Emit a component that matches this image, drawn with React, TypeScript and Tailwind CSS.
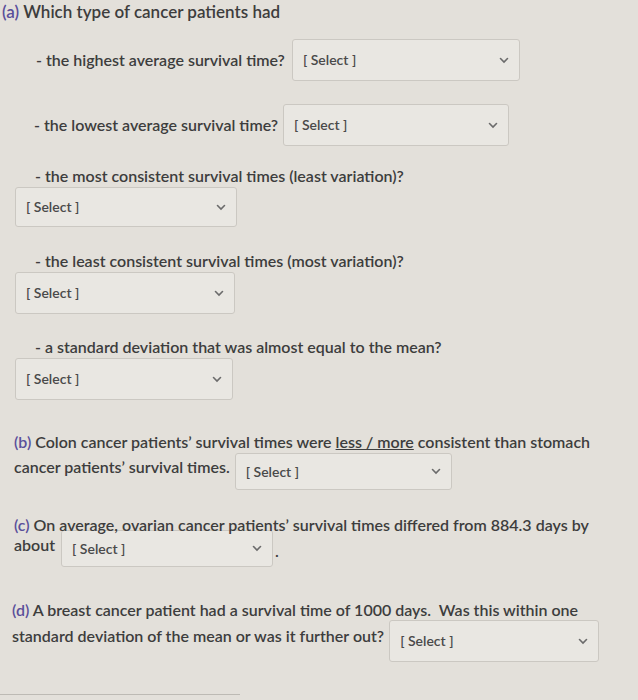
import React from 'react';

function SelectBox({ className = '' }: { className?: string }) {
  return (
    <div
      className={`flex shrink-0 items-center justify-between rounded-[3px] border border-[#cbc8c2] bg-[#e9e7e2] pl-[10px] pr-[10px] text-[14px] text-[#4a4a4a] ${className}`}
    >
      <span>[ Select ]</span>
      <svg width="10" height="7" viewBox="0 0 10 7" className="text-[#6b6b6b]">
        <path d="M1.5 1.5 L5 5 L8.5 1.5" fill="none" stroke="currentColor" strokeWidth="1.6" strokeLinecap="round" />
      </svg>
    </div>
  );
}

export default function App() {
  return (
    <div className="min-h-screen bg-[#e3e0da] font-['Lato','Open_Sans',sans-serif] text-[16px] font-semibold leading-5 text-[#3d3d3d] overflow-hidden">
      {/* (a) */}
      <div className="pl-[2px] pt-[2px] text-[17px]">
        <span className="text-[#5a4f9a]">(a)</span> Which type of cancer patients had
      </div>

      <div className="mt-[17px] flex items-center pl-[36px]">
        <span>- the highest average survival time?</span>
        <SelectBox className="ml-[7px] h-[42px] w-[228px]" />
      </div>

      <div className="mt-[23px] flex items-center pl-[34px]">
        <span>- the lowest average survival time?</span>
        <SelectBox className="ml-[5px] h-[42px] w-[226px]" />
      </div>

      <div className="mt-[20px] pl-[35px]">- the most consistent survival times (least variation)?</div>
      <SelectBox className="ml-[15px] mt-[1px] h-[40px] w-[222px]" />

      <div className="mt-[24px] pl-[35px]">- the least consistent survival times (most variation)?</div>
      <SelectBox className="ml-[15px] mt-[1px] h-[42px] w-[220px]" />

      <div className="mt-[23px] pl-[35px]">- a standard deviation that was almost equal to the mean?</div>
      <SelectBox className="ml-[15px] mt-[1px] h-[42px] w-[218px]" />

      {/* (b) */}
      <div className="relative z-10 mt-[32px] pl-[14px]">
        <span className="text-[#5a4f9a]">(b)</span> Colon cancer patients’ survival times were{' '}
        <span className="underline">less / more</span> consistent than stomach
      </div>
      <div className="mt-[1px] flex items-start pl-[14px]">
        <span className="pt-[4px]">cancer patients’ survival times.</span>
        <SelectBox className="ml-[5px] h-[37px] w-[217px]" />
      </div>

      {/* (c) */}
      <div className="relative z-10 mt-[25px] pl-[14px]">
        <span className="text-[#5a4f9a]">(c)</span> On average, ovarian cancer patients’ survival times differed from 884.3 days by
      </div>
      <div className="-mt-[5px] flex items-start pl-[14px]">
        <span className="pt-[5px]">about</span>
        <SelectBox className="ml-[6px] h-[37px] w-[212px]" />
        <span className="ml-[2px] pt-[11px]">.</span>
      </div>

      {/* (d) */}
      <div className="relative z-10 mt-[33px] pl-[12px]">
        <span className="text-[#5a4f9a]">(d)</span> A breast cancer patient had a survival time of 1000 days.&nbsp; Was this within one
      </div>
      <div className="flex items-start pl-[12px]">
        <span className="pt-[6px]">standard deviation of the mean or was it further out?</span>
        <SelectBox className="ml-[5px] h-[42px] w-[210px]" />
      </div>

      <div className="mt-[32px] h-px w-[240px] bg-[#bdbab4]" />
    </div>
  );
}
